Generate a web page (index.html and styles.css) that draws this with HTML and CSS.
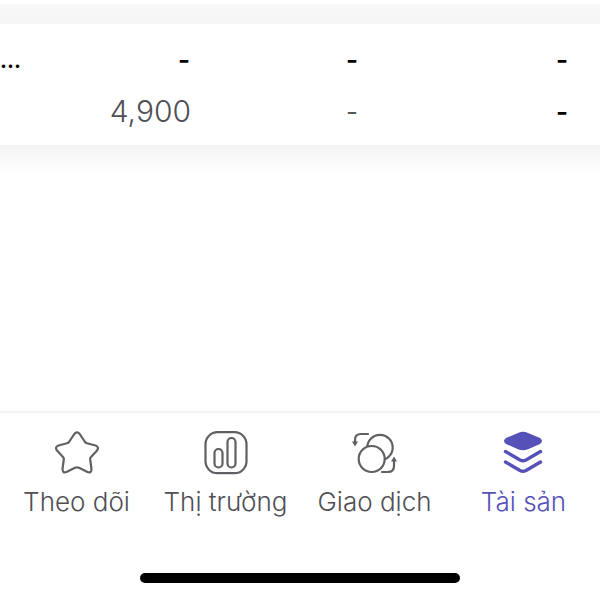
FILE: index.html
```html
<!DOCTYPE html>
<html lang="vi">
<head>
  <meta charset="UTF-8">
  <title>Tài sản</title>
  <link rel="stylesheet" href="styles.css">
</head>
<body>
  <div class="band"></div>
  <div class="table">
    <div class="row strong">
      <span class="name">...</span><span>-</span><span>-</span><span>-</span>
    </div>
    <div class="row">
      <span class="name"></span><span class="num">4,900</span><span>-</span><span class="dark">-</span>
    </div>
  </div>
  <div class="fade"></div>

  <nav class="tabs">
    <a class="tab">
      <svg class="icon" width="44" height="44" viewBox="0 0 44 44" fill="none">
        <path d="M19.3 3Q22-.2 24.7 3L30 11Q30.8 12 32 12.3L40.5 14.5Q44.5 16 42 19.5L36 26Q35 27 35.2 28.5L36.5 38Q36.5 42.5 32.5 41L24 36.8Q22 36 20 36.8L11.5 41Q7.5 42.5 7.5 38L8.8 28.5Q9 27 8 26L2 19.5Q-.5 16 3.5 14.5L12 12.3Q13.2 12 14 11Z"/>
      </svg>
      Theo dõi
    </a>
    <a class="tab">
      <svg class="icon" width="44" height="44" viewBox="0 0 44 44" fill="none">
        <rect x="1.5" y="1.2" width="41" height="41" rx="12"/>
        <rect x="10.5" y="18" width="8" height="18.5" rx="4"/>
        <rect x="23.5" y="7" width="8" height="29.5" rx="4"/>
      </svg>
      Thị trường
    </a>
    <a class="tab">
      <svg class="icon" width="46" height="44" viewBox="0 0 46 44" fill="none">
        <circle cx="28" cy="16.5" r="12.7"/>
        <circle class="front" cx="19.7" cy="28" r="13"/>
        <path d="M16 3H9Q3 3 3 9V13M30 41H36Q42 41 42 35V30"/>
        <path class="head" d="M0 10.5H6L3 15.5ZM39 30.5H45L42 25.5Z"/>
      </svg>
      Giao dịch
    </a>
    <a class="tab active">
      <svg class="icon" width="41" height="44" viewBox="0 0 41 44" fill="none">
        <path class="head" d="M15 2Q20-.5 25 2L37 7Q41 10 37 13L25 18.2Q20 20.4 15 18.2L3 13Q-1 10 3 7Z"/>
        <path class="thick" d="M2.5 20.5L17 29Q20 30.5 23 29L37.5 20.5M2.5 31L17 39.5Q20 41 23 39.5L37.5 31"/>
      </svg>
      Tài sản
    </a>
  </nav>
  <div class="home-bar"></div>
</body>
</html>
```

FILE: styles.css
```css
html, body { height: 100%; }
body {
  margin: 0;
  background: #fff;
  font-family: Inter, "Noto Sans", sans-serif;
  color: #57575c;
  display: flex;
  flex-direction: column;
  overflow: hidden;
}

.band { height: 20px; margin-top: 4px; background: linear-gradient(#f8f8f8, #f5f5f5); }
.fade { height: 30px; background: linear-gradient(#f4f4f4, #fff); }

.table { height: 121px; padding-top: 9px; box-sizing: border-box; }
.row {
  display: grid;
  grid-template-columns: 20px 170px 168px 210px;
  height: 52px;
  align-items: center;
  font-size: 26px;
  text-align: right;
}
.row.strong { color: #000; font-weight: 600; }
.row .name { text-align: left; font-size: 21px; font-weight: 700; margin-top: 2px; }
.row .num { font-size: 30px; font-weight: 300; color: #4f4f55; margin-right: -1px; }
.row .dark { color: #000; font-weight: 600; }

.tabs {
  margin-top: auto;
  height: 119px;
  padding: 18px 2px 0;
  box-sizing: border-box;
  border-top: 2px solid #f4f4f4;
  display: grid;
  grid-template-columns: repeat(4, 149px);
}
.tab {
  display: flex;
  flex-direction: column;
  align-items: center;
  gap: 11px;
  font-size: 26px;
  line-height: 32px;
  font-weight: 350;
  color: #4f4f55;
  white-space: nowrap;
}
.tab.active { color: #5551b9; }

.icon { stroke: #5f5f64; stroke-width: 2.2; stroke-linejoin: round; stroke-linecap: round; }
.icon .front { fill: #fff; }
.icon .head { fill: #5f5f64; stroke: none; }
.active .icon { stroke: #5551b9; }
.active .icon .head { fill: #5551b9; }
.active .icon .thick { stroke-width: 3.4; }

.home-bar {
  width: 320px;
  height: 10px;
  margin: 43px auto 17px;
  border-radius: 5px;
  background: #000;
}
```
